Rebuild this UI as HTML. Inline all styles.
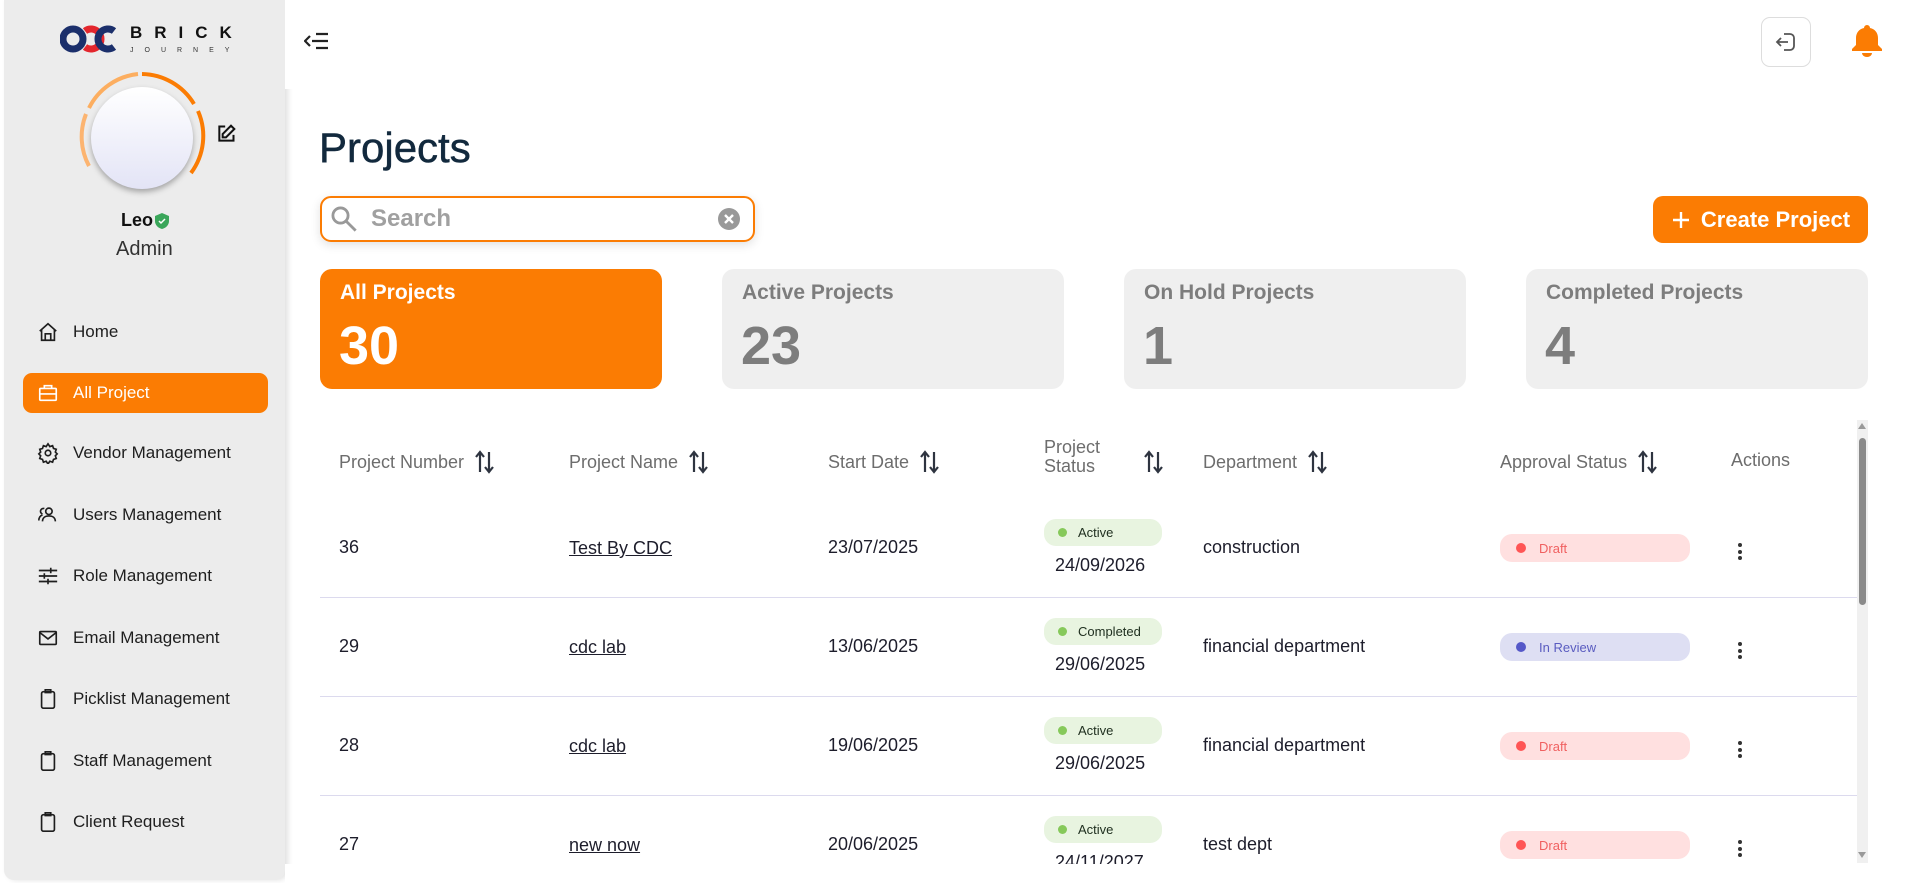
<!DOCTYPE html>
<html><head><meta charset="utf-8"><style>
*{box-sizing:border-box;margin:0;padding:0}
body{width:1906px;height:883px;overflow:hidden;background:#fff;font-family:"Liberation Sans",Arial,sans-serif;position:relative;color:#1c1c28}
.abs{position:absolute}
.side{left:4px;top:0;width:281px;height:880px;background:#ececec;border-radius:0 0 10px 10px;box-shadow:3px 0 6px rgba(0,0,0,.12)}
.nav{position:absolute;left:23px;width:245px;height:40px;display:flex;align-items:center;font-size:17px;color:#1e1e1e}
.nav svg{margin-left:14px;margin-right:14px;width:22px;height:22px;fill:none;stroke:#1e1e1e;stroke-width:1.8}
.nav.on{background:#fb7c03;color:#fff;border-radius:9px}
.nav.on svg{stroke:#fff}
.card{position:absolute;top:269px;width:342px;height:120px;border-radius:12px;background:#efefef;color:#7d7d7d}
.card .l{position:absolute;left:20px;top:12px;font-size:21px;font-weight:bold}
.card .n{position:absolute;left:19px;top:46px;font-size:54px;font-weight:bold}
.th{position:absolute;top:450px;font-size:18px;color:#6d6d6d;display:flex;align-items:center}
.sort{margin-left:10px;width:22px;height:24px}
.td{position:absolute;font-size:18px;color:#1d1d2b}
.u{text-decoration:underline}
.line{position:absolute;left:320px;width:1537px;height:1px;background:#dcdaee}
.pill{position:absolute;left:1044px;width:118px;height:27px;border-radius:12px;background:#e8f4e0;font-size:13px;color:#203020;display:flex;align-items:center;padding-left:14px}
.pill i{width:9px;height:9px;border-radius:50%;background:#86c95a;margin-right:11px}
.ap{position:absolute;left:1500px;width:190px;height:28px;border-radius:12px;background:#ffe0e0;font-size:13px;color:#f06060;display:flex;align-items:center;padding-left:16px}
.ap i{width:10px;height:10px;border-radius:50%;background:#f55;margin-right:13px}
.ap.r{background:#dedff3;color:#5a5cc0}.ap.r i{background:#5558c8}
.dt{position:absolute;left:1055px;font-size:18px;color:#1d1d2b}
.keb{position:absolute;left:1738px;width:4px}
.keb b{display:block;width:4px;height:4px;border-radius:50%;background:#333;margin-bottom:2.5px}
</style></head><body>
<svg width="0" height="0" style="position:absolute"><defs><symbol id="srt" viewBox="0 0 22 24"><path d="M6 22V3M2 7l4-5 4 5M15 2v19M11 17l4 5 4-5" fill="none" stroke="#2e3440" stroke-width="2.2"/></symbol></defs></svg>
<div class="abs side"></div>
<!-- logo -->
<div class="abs" style="left:60px;top:25px;width:60px;height:30px">
<svg width="60" height="30" viewBox="0 0 60 30"><circle cx="13" cy="14" r="10" fill="none" stroke="#1b2f6b" stroke-width="7"/><path d="M25 6 a10 10 0 1 1 0 16" fill="none" stroke="#e3262d" stroke-width="7"/><path d="M54 6 a10 10 0 1 0 0 16" fill="none" stroke="#1b2f6b" stroke-width="7"/></svg></div>
<div class="abs" style="left:130px;top:23px;font-size:17px;font-weight:bold;letter-spacing:12px;color:#111">BRICK</div>
<div class="abs" style="left:130px;top:47px;font-size:7px;letter-spacing:11px;color:#333">JOURNEY</div>
<!-- avatar -->
<svg class="abs" style="left:72px;top:66px" width="140" height="140" viewBox="0 0 140 140">
<path d="M70 8 A62 62 0 0 1 122 38" fill="none" stroke="#fb7c03" stroke-width="4"/>
<path d="M126 45 A62 62 0 0 1 119 107" fill="none" stroke="#fb7c03" stroke-width="4"/>
<path d="M66 8 A62 62 0 0 0 17 42" fill="none" stroke="#fcae60" stroke-width="4"/>
<path d="M14 48 A62 62 0 0 0 17 100" fill="none" stroke="#fcb470" stroke-width="4"/>
<defs><linearGradient id="g" x1="0" y1="0" x2="0" y2="1"><stop offset="0" stop-color="#fff"/><stop offset="1" stop-color="#e3e4f6"/></linearGradient></defs>
<circle cx="70" cy="72" r="51" fill="url(#g)" style="filter:drop-shadow(0 3px 3px rgba(0,0,0,.3))"/></svg>
<svg class="abs" style="left:216px;top:124px" width="20" height="20" viewBox="0 0 24 24" fill="none" stroke="#111" stroke-width="2.4"><path d="M11 3H4v17h17v-7"/><path d="M18 2l4 4-10 10H8v-4z"/></svg>
<div class="abs" style="left:121px;top:210px;font-size:18px;font-weight:bold;color:#111">Leo</div>
<svg class="abs" style="left:155px;top:213px" width="14" height="16" viewBox="0 0 14 16"><path d="M7 0l7 3v5c0 4-3 7-7 8-4-1-7-4-7-8V3z" fill="#3aa65a"/><path d="M4 8l2 2 4-4" stroke="#fff" stroke-width="1.5" fill="none"/></svg>
<div class="abs" style="left:116px;top:238px;font-size:20px;color:#333">Admin</div>
<!-- nav -->
<div class="nav" style="top:312px"><svg viewBox="0 0 24 24"><path d="M3 11l9-8 9 8M5 9v12h14V9M9 21v-7h6v7"/></svg>Home</div>
<div class="nav on" style="top:373px"><svg viewBox="0 0 24 24"><rect x="3" y="7" width="18" height="13" rx="1"/><path d="M8 7V4h8v3M3 13h18"/></svg>All Project</div>
<div class="nav" style="top:433px"><svg viewBox="0 0 24 24"><circle cx="12" cy="12" r="3"/><path d="M12 2l2 3 3-1 1 3 3 1-1 3 2 2-2 2 1 3-3 1-1 3-3-1-2 3-2-3-3 1-1-3-3-1 1-3-2-2 2-2-1-3 3-1 1-3 3 1z"/></svg>Vendor Management</div>
<div class="nav" style="top:495px"><svg viewBox="0 0 24 24"><circle cx="13" cy="8" r="3.5"/><path d="M6 19c0-4 3-6 7-6s7 2 7 6M8 5a3 3 0 0 0-2 6M2 18c0-3 1-5 4-6"/></svg>Users Management</div>
<div class="nav" style="top:556px"><svg viewBox="0 0 24 24"><path d="M2 6h20M2 12h20M2 18h20M15 3v6M8 9v6M12 15v6"/></svg>Role Management</div>
<div class="nav" style="top:618px"><svg viewBox="0 0 24 24"><rect x="3" y="5" width="18" height="14" rx="1"/><path d="M3 6l9 7 9-7"/></svg>Email Management</div>
<div class="nav" style="top:679px"><svg viewBox="0 0 24 24"><rect x="5" y="4" width="14" height="18" rx="2"/><path d="M9 2h6v3H9z"/></svg>Picklist Management</div>
<div class="nav" style="top:741px"><svg viewBox="0 0 24 24"><rect x="5" y="4" width="14" height="18" rx="2"/><path d="M9 2h6v3H9z"/></svg>Staff Management</div>
<div class="nav" style="top:802px"><svg viewBox="0 0 24 24"><rect x="5" y="4" width="14" height="18" rx="2"/><path d="M9 2h6v3H9z"/></svg>Client Request</div>
<!-- topbar -->
<div class="abs" style="left:285px;top:0;width:1621px;height:89px;background:#fff"></div>
<svg class="abs" style="left:304px;top:30px" width="26" height="22" viewBox="0 0 26 22" fill="none" stroke="#222" stroke-width="2.2"><path d="M8 11h16M12 4h12M12 18h12M6 6l-5 5 5 5"/></svg>
<div class="abs" style="left:1761px;top:17px;width:50px;height:50px;border:1px solid #ddd;border-radius:9px"></div>
<svg class="abs" style="left:1774px;top:30px" width="24" height="24" viewBox="0 0 24 24" fill="none" stroke="#555" stroke-width="1.8"><path d="M10 4h6a4 4 0 0 1 4 4v8a4 4 0 0 1-4 4h-6"/><path d="M14 12H3M7 8l-4 4 4 4"/></svg>
<svg class="abs" style="left:1851px;top:24px" width="32" height="34" viewBox="0 0 32 34" fill="#fb7c03"><path d="M16 1a3 3 0 0 1 3 3c5 1 8 5 8 10v7l4 4v2H1v-2l4-4v-7c0-5 3-9 8-10a3 3 0 0 1 3-3z"/><path d="M11 29h10a5 4 0 0 1-10 0z"/></svg>
<!-- title -->
<div class="abs" style="left:319px;top:124px;font-size:42px;color:#12293d;-webkit-text-stroke:0.5px #12293d">Projects</div>
<div class="abs" style="left:320px;top:196px;width:435px;height:46px;border:2px solid #fb7c03;border-radius:11px;box-shadow:0 3px 10px rgba(0,0,0,.12)"></div>
<svg class="abs" style="left:330px;top:205px" width="28" height="28" viewBox="0 0 24 24" fill="none" stroke="#999" stroke-width="2.4"><circle cx="9" cy="9" r="6.5"/><path d="M14 14l8 8"/></svg>
<div class="abs" style="left:371px;top:205px;font-size:24px;font-weight:bold;color:#a0a0a0">Search</div>
<svg class="abs" style="left:717px;top:207px" width="24" height="24" viewBox="0 0 24 24"><circle cx="12" cy="12" r="11" fill="#999"/><path d="M8 8l8 8M16 8l-8 8" stroke="#fff" stroke-width="2.4"/></svg>
<div class="abs" style="left:1653px;top:196px;width:215px;height:47px;background:#fb7c03;border-radius:10px;color:#fff;font-size:22px;font-weight:bold;display:flex;align-items:center;justify-content:center"><svg width="20" height="20" viewBox="0 0 20 20" style="margin-right:10px"><path d="M10 2v16M2 10h16" stroke="#fff" stroke-width="2.4"/></svg>Create Project</div>
<!-- cards -->
<div class="card" style="left:320px;background:#fb7c03;color:#fff"><div class="l">All Projects</div><div class="n">30</div></div>
<div class="card" style="left:722px"><div class="l">Active Projects</div><div class="n">23</div></div>
<div class="card" style="left:1124px"><div class="l">On Hold Projects</div><div class="n">1</div></div>
<div class="card" style="left:1526px"><div class="l">Completed Projects</div><div class="n">4</div></div>
<!-- table header -->
<div class="th" style="left:339px">Project Number<svg class="sort"><use href="#srt"/></svg></div>
<div class="th" style="left:569px">Project Name<svg class="sort"><use href="#srt"/></svg></div>
<div class="th" style="left:828px">Start Date<svg class="sort"><use href="#srt"/></svg></div>
<div class="th" style="left:1044px;top:438px;line-height:19px">Project<br>Status</div>
<div class="th" style="left:1133px"><svg class="sort"><use href="#srt"/></svg></div>
<div class="th" style="left:1203px">Department<svg class="sort"><use href="#srt"/></svg></div>
<div class="th" style="left:1500px">Approval Status<svg class="sort"><use href="#srt"/></svg></div>
<div class="th" style="left:1731px">Actions</div>
<!-- scrollbar -->
<div class="abs" style="left:1857px;top:420px;width:11px;height:443px;background:#f0f0f0"></div>
<div class="abs" style="left:1859px;top:438px;width:7px;height:167px;background:#8a8a8a;border-radius:4px"></div>
<div class="abs" style="left:1858px;top:423px;width:0;height:0;border-left:4px solid transparent;border-right:4px solid transparent;border-bottom:6px solid #999"></div>
<div class="abs" style="left:1858px;top:852px;width:0;height:0;border-left:4px solid transparent;border-right:4px solid transparent;border-top:6px solid #999"></div>
<!-- rows -->
<div class="td" style="left:339px;top:537px">36</div>
<div class="td u" style="left:569px;top:538px">Test By CDC</div>
<div class="td" style="left:828px;top:537px">23/07/2025</div>
<div class="pill" style="top:519px"><i></i>Active</div><div class="dt" style="top:555px">24/09/2026</div>
<div class="td" style="left:1203px;top:537px">construction</div>
<div class="ap" style="top:534px"><i></i>Draft</div>
<div class="keb" style="top:543px"><b></b><b></b><b></b></div>
<div class="line" style="top:597px"></div>

<div class="td" style="left:339px;top:636px">29</div>
<div class="td u" style="left:569px;top:637px">cdc lab</div>
<div class="td" style="left:828px;top:636px">13/06/2025</div>
<div class="pill" style="top:618px"><i></i>Completed</div><div class="dt" style="top:654px">29/06/2025</div>
<div class="td" style="left:1203px;top:636px">financial department</div>
<div class="ap r" style="top:633px"><i></i>In Review</div>
<div class="keb" style="top:642px"><b></b><b></b><b></b></div>
<div class="line" style="top:696px"></div>

<div class="td" style="left:339px;top:735px">28</div>
<div class="td u" style="left:569px;top:736px">cdc lab</div>
<div class="td" style="left:828px;top:735px">19/06/2025</div>
<div class="pill" style="top:717px"><i></i>Active</div><div class="dt" style="top:753px">29/06/2025</div>
<div class="td" style="left:1203px;top:735px">financial department</div>
<div class="ap" style="top:732px"><i></i>Draft</div>
<div class="keb" style="top:741px"><b></b><b></b><b></b></div>
<div class="line" style="top:795px"></div>

<div class="td" style="left:339px;top:834px">27</div>
<div class="td u" style="left:569px;top:835px">new now</div>
<div class="td" style="left:828px;top:834px">20/06/2025</div>
<div class="pill" style="top:816px"><i></i>Active</div><div class="dt" style="top:852px;clip-path:inset(0 0 8px 0)">24/11/2027</div>
<div class="td" style="left:1203px;top:834px">test dept</div>
<div class="ap" style="top:831px"><i></i>Draft</div>
<div class="keb" style="top:840px"><b></b><b></b><b></b></div>
<div class="abs" style="left:285px;top:864px;width:1572px;height:19px;background:#fff"></div>
</body></html>
